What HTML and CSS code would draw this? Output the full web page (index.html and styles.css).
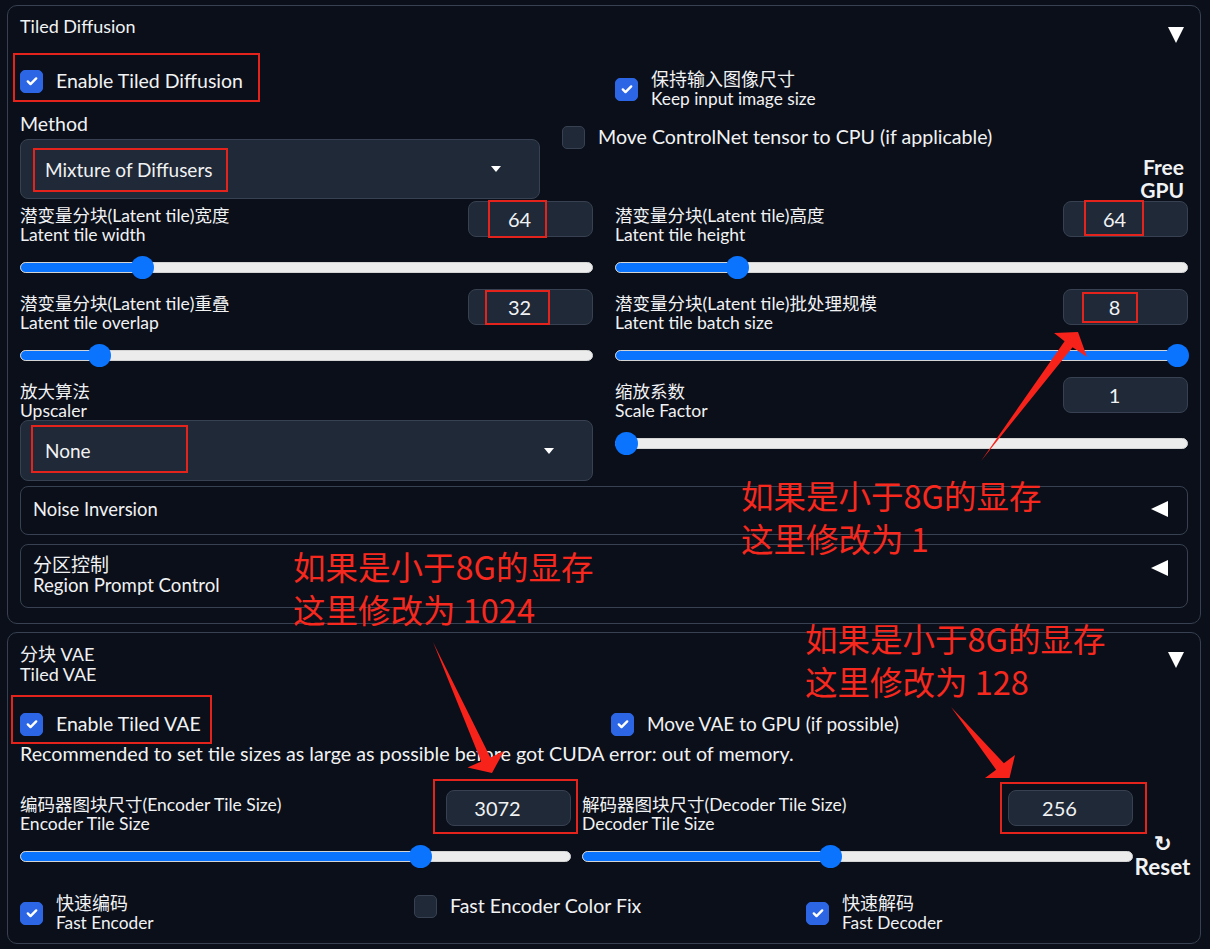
FILE: index.html
```html
<!DOCTYPE html>
<html lang="zh">
<head>
<meta charset="utf-8">
<title>Tiled Diffusion</title>
<link rel="stylesheet" href="styles.css">
</head>
<body>
<div class="page">
  <section class="panel p1">
    <div class="panel-head">
      <span class="title">Tiled Diffusion</span>
      <span class="tri-down"></span>
    </div>
    <div class="top-row">
      <div class="col-method">
        <div class="enable-row">
          <label class="check big"><span class="cb on"><svg viewBox="0 0 16 16"><path d="M3.8 8.4l2.7 2.7L12.2 5.4"/></svg></span><span>Enable Tiled Diffusion</span></label>
        </div>
        <div class="field-label">Method</div>
        <div class="dropdown dd-method"><span>Mixture of Diffusers</span><span class="caret"></span></div>
      </div>
      <div class="col-opts">
        <label class="check keep"><span class="cb on"><svg viewBox="0 0 16 16"><path d="M3.8 8.4l2.7 2.7L12.2 5.4"/></svg></span><span class="two"><span class="zh">保持输入图像尺寸</span><span class="en">Keep input image size</span></span></label>
        <label class="check move-cn"><span class="cb"></span><span>Move ControlNet tensor to CPU (if applicable)</span></label>
      </div>
      <div class="col-free"><span>Free</span><span>GPU</span></div>
    </div>
    <div class="grid2">
      <div class="sblock">
        <div class="sb-head"><div class="lbl2"><div>潜变量分块(Latent tile)宽度</div><div>Latent tile width</div></div><div class="numbox">64</div></div>
        <div class="slider" style="--p:0.2015"><div class="track"><div class="fill"></div></div><div class="thumb"></div></div>
      </div>
      <div class="sblock">
        <div class="sb-head"><div class="lbl2"><div>潜变量分块(Latent tile)高度</div><div>Latent tile height</div></div><div class="numbox">64</div></div>
        <div class="slider" style="--p:0.2015"><div class="track"><div class="fill"></div></div><div class="thumb"></div></div>
      </div>
      <div class="sblock">
        <div class="sb-head"><div class="lbl2"><div>潜变量分块(Latent tile)重叠</div><div>Latent tile overlap</div></div><div class="numbox">32</div></div>
        <div class="slider" style="--p:0.125"><div class="track"><div class="fill"></div></div><div class="thumb"></div></div>
      </div>
      <div class="sblock">
        <div class="sb-head"><div class="lbl2"><div>潜变量分块(Latent tile)批处理规模</div><div>Latent tile batch size</div></div><div class="numbox">8</div></div>
        <div class="slider" style="--p:1"><div class="track"><div class="fill"></div></div><div class="thumb"></div></div>
      </div>
      <div class="ublock">
        <div class="lbl2"><div>放大算法</div><div>Upscaler</div></div>
        <div class="dropdown dd-up"><span>None</span><span class="caret"></span></div>
      </div>
      <div class="sblock">
        <div class="sb-head"><div class="lbl2"><div>缩放系数</div><div>Scale Factor</div></div><div class="numbox">1</div></div>
        <div class="slider" style="--p:0"><div class="track"><div class="fill"></div></div><div class="thumb"></div></div>
      </div>
    </div>
    <div class="acc acc-noise"><span>Noise Inversion</span><span class="tri-left"></span></div>
    <div class="acc acc-region"><div class="lbl2b"><div class="zh-big">分区控制</div><div>Region Prompt Control</div></div><span class="tri-left"></span></div>
  </section>

  <section class="panel p2">
    <div class="panel-head head2">
      <span class="title two-title"><span>分块 VAE</span><span>Tiled VAE</span></span>
      <span class="tri-down"></span>
    </div>
    <div class="vae-row">
      <label class="check big"><span class="cb on"><svg viewBox="0 0 16 16"><path d="M3.8 8.4l2.7 2.7L12.2 5.4"/></svg></span><span>Enable Tiled VAE</span></label>
      <label class="check big mid"><span class="cb on"><svg viewBox="0 0 16 16"><path d="M3.8 8.4l2.7 2.7L12.2 5.4"/></svg></span><span>Move VAE to GPU (if possible)</span></label>
    </div>
    <div class="info">Recommended to set tile sizes as large as possible before got CUDA error: out of memory.</div>
    <div class="tile-row">
      <div class="sblock">
        <div class="sb-head"><div class="lbl2"><div>编码器图块尺寸(Encoder Tile Size)</div><div>Encoder Tile Size</div></div><div class="numbox">3072</div></div>
        <div class="slider" style="--p:0.737"><div class="track"><div class="fill"></div></div><div class="thumb"></div></div>
      </div>
      <div class="sblock">
        <div class="sb-head"><div class="lbl2"><div>解码器图块尺寸(Decoder Tile Size)</div><div>Decoder Tile Size</div></div><div class="numbox">256</div></div>
        <div class="slider" style="--p:0.449"><div class="track"><div class="fill"></div></div><div class="thumb"></div></div>
      </div>
      <div class="reset"><span class="reset-ico">↻</span><span class="reset-txt">Reset</span></div>
    </div>
    <div class="bottom-row">
      <label class="check"><span class="cb on"><svg viewBox="0 0 16 16"><path d="M3.8 8.4l2.7 2.7L12.2 5.4"/></svg></span><span class="two"><span class="zh">快速编码</span><span class="en">Fast Encoder</span></span></label>
      <label class="check big single"><span class="cb"></span><span>Fast Encoder Color Fix</span></label>
      <label class="check"><span class="cb on"><svg viewBox="0 0 16 16"><path d="M3.8 8.4l2.7 2.7L12.2 5.4"/></svg></span><span class="two"><span class="zh">快速解码</span><span class="en">Fast Decoder</span></span></label>
    </div>
  </section>

  <div class="annot">
    <div class="rbox rb-enable"></div>
    <div class="rbox rb-method"></div>
    <div class="rbox rb-w"></div>
    <div class="rbox rb-ov"></div>
    <div class="rbox rb-h"></div>
    <div class="rbox rb-b"></div>
    <div class="rbox rb-none"></div>
    <div class="rbox rb-vae"></div>
    <div class="rbox rb-enc"></div>
    <div class="rbox rb-dec"></div>
    <svg class="arrows" viewBox="0 0 1210 949" width="1210" height="949">
      <polygon points="981,461 1064.6,341.2 1054,333 1078,332 1087,357 1072.6,347.2"/>
      <polygon points="433,642 481.2,761.4 467.6,767.6 492,773 504,751 490.4,757.4"/>
      <polygon points="951,707 996.1,769.7 985,778 1009.5,778 1015,755 1003.9,763.3"/>
    </svg>
    <div class="note note1">如果是小于8G的显存<br>这里修改为 1</div>
    <div class="note note2">如果是小于8G的显存<br>这里修改为 1024</div>
    <div class="note note3">如果是小于8G的显存<br>这里修改为 128</div>
  </div>
</div>
</body>
</html>
```

FILE: styles.css
```css
* { box-sizing: border-box; }
html, body { margin: 0; background: #0b0f19; }
body {
  color: #f1f2f4;
  font-family: Lato, "Noto Sans CJK SC", sans-serif;
}
.page {
  position: relative;
  width: 1210px;
  height: 949px;
  padding: 5px 9px 0 7px;
  display: flex;
  flex-direction: column;
  gap: 8px;
  overflow: hidden;
}
.panel {
  border: 1px solid #374151;
  border-radius: 10px;
  padding: 10px 12px 15px;
}
.p1 { height: 619px; }
.p2 { height: 312px; padding-top: 11px; padding-bottom: 11px; }

.panel-head {
  display: flex;
  justify-content: space-between;
  align-items: flex-start;
  height: 20px;
}
.title { font-size: 18px; line-height: 20px; }
.two-title { display: flex; flex-direction: column; }
.head2 { height: 40px; }
.tri-down {
  width: 0; height: 0;
  border-left: 8px solid transparent;
  border-right: 8px solid transparent;
  border-top: 16px solid #ffffff;
  margin-top: 11px;
  margin-right: 4px;
}
.head2 .tri-down { margin-top: 8px; }
.tri-left {
  width: 0; height: 0;
  border-top: 8px solid transparent;
  border-bottom: 8px solid transparent;
  border-right: 17px solid #ffffff;
}

/* checkboxes */
.check {
  display: flex;
  align-items: center;
  gap: 13px;
  font-size: 17.5px;
}
.big { font-size: 19.5px; line-height: 24px; }
.mid { font-size: 19px; }
.cb {
  flex: none;
  width: 23px; height: 23px;
  border-radius: 5px;
  background: #1f2937;
  border: 1px solid #374151;
  display: flex;
  align-items: center;
  justify-content: center;
}
.cb.on { background: #2d66e5; border-color: #2d66e5; }
.cb svg { width: 16px; height: 16px; }
.cb path { fill: none; stroke: #fff; stroke-width: 2.4; stroke-linecap: round; stroke-linejoin: round; }
.two { display: flex; flex-direction: column; white-space: nowrap; }
.two .zh { font-size: 18px; line-height: 19px; }
.two .en { font-size: 17.3px; line-height: 19px; }

/* top row */
.top-row { display: flex; height: 148px; margin-top: 17px; }
.col-method { width: 520px; flex: none; }
.enable-row { height: 56px; display: flex; align-items: center; }
.field-label { margin-top: 4px; font-size: 19.5px; line-height: 22px; }
.dropdown {
  display: flex;
  align-items: center;
  justify-content: space-between;
  background: #1f2937;
  border: 1px solid #374151;
  border-radius: 8px;
  font-size: 19px;
}
.dd-method { margin-top: 4px; height: 60px; padding: 0 38px 0 24px; }
.caret {
  width: 0; height: 0;
  border-left: 5px solid transparent;
  border-right: 5px solid transparent;
  border-top: 6px solid #ffffff;
}
.col-opts { margin-left: 22px; padding-top: 17px; }
.keep { margin-left: 53px; }
.move-cn { margin-top: 17px; font-size: 19.6px; line-height: 24px; white-space: nowrap; }
.col-free {
  margin-left: auto;
  margin-right: 4px;
  padding-top: 102px;
  display: flex;
  flex-direction: column;
  align-items: flex-end;
  font-weight: 700;
  font-size: 21px;
  line-height: 23px;
}

/* slider grid */
.grid2 {
  display: grid;
  grid-template-columns: 573px 573px;
  column-gap: 22px;
  row-gap: 10px;
}
.sb-head { display: flex; justify-content: space-between; height: 36px; }
.lbl2 { padding-top: 5px; font-size: 17.5px; line-height: 19px; white-space: nowrap; }
.numbox {
  flex: none;
  width: 125px; height: 36px;
  border: 1px solid #374151;
  background: #1f2937;
  border-radius: 8px;
  display: flex;
  align-items: center;
  justify-content: center;
  padding-right: 22px;
  font-size: 20px;
}
.slider { position: relative; height: 24px; margin-top: 18px; }
.track {
  position: absolute;
  left: 0; right: 0; top: 7px;
  height: 11px;
  border-radius: 6px;
  background: #ececec;
  border: 1px solid #d4d4d4;
  overflow: hidden;
}
.fill { height: 100%; background: #0b74fe; width: calc(11px + var(--p) * (100% - 22px)); }
.thumb {
  position: absolute;
  top: 1px;
  width: 23px; height: 23px;
  border-radius: 50%;
  background: #0b74fe;
  left: calc(var(--p) * (100% - 22px) - 0.5px);
}
.dd-up { height: 61px; padding: 0 38px 0 24px; }

/* accordions */
.acc {
  border: 1px solid #374151;
  border-radius: 8px;
  display: flex;
  justify-content: space-between;
  padding: 0 19px 0 12px;
}
.acc-noise { margin-top: 5px; height: 49px; align-items: center; font-size: 18.4px; padding-bottom: 3px; }
.acc-region { margin-top: 9px; height: 64px; align-items: flex-start; padding-top: 10px; }
.acc-region .tri-left { margin-top: 5px; }
.lbl2b { font-size: 18.6px; line-height: 20px; }
.zh-big { font-size: 19px; }

/* panel 2 */
.vae-row { margin-top: 28px; display: grid; grid-template-columns: 591px 1fr; height: 24px; }
.info { margin-top: 8px; font-size: 19.7px; line-height: 20px; white-space: nowrap; }
.tile-row {
  margin-top: 26px;
  height: 78px;
  display: grid;
  grid-template-columns: 551px 551px 1fr;
  column-gap: 11px;
}
.tile-row > .reset { margin-left: -11px; margin-right: -4px; }
.reset {
  padding-top: 42px;
  display: flex;
  flex-direction: column;
  align-items: center;
  font-weight: 700;
  font-size: 22.5px;
}
.reset-ico { line-height: 22px; font-size: 21px; }
.reset-txt { line-height: 25px; }
.bottom-row {
  margin-top: 26px;
  display: grid;
  grid-template-columns: 394px 392px 1fr;
  align-items: start;
}
.single { font-size: 19.5px; }

/* annotations */
.annot { position: absolute; inset: 0; pointer-events: none; }
.rbox { position: absolute; border: 2px solid #e5231d; }
.rb-enable { left: 13px; top: 53px; width: 247px; height: 49px; }
.rb-method { left: 33px; top: 148px; width: 195px; height: 44px; }
.rb-w { left: 488px; top: 200px; width: 59px; height: 38px; }
.rb-ov { left: 485px; top: 290px; width: 65px; height: 35px; }
.rb-h { left: 1084px; top: 200px; width: 60px; height: 36px; }
.rb-b { left: 1082px; top: 292px; width: 56px; height: 31px; }
.rb-none { left: 31px; top: 425px; width: 157px; height: 48px; }
.rb-vae { left: 11px; top: 695px; width: 201px; height: 49px; }
.rb-enc { left: 433px; top: 779px; width: 145px; height: 55px; }
.rb-dec { left: 1000px; top: 782px; width: 147px; height: 52px; }
.arrows { position: absolute; left: 0; top: 0; }
.arrows polygon { fill: #f7231b; }
.note {
  position: absolute;
  color: #f7281e;
  font-family: "Noto Sans CJK SC", sans-serif;
  font-size: 32.5px;
  line-height: 43px;
  white-space: nowrap;
}
.note1 { left: 741px; top: 473px; }
.note2 { left: 293px; top: 544px; }
.note3 { left: 805px; top: 616px; }
```
